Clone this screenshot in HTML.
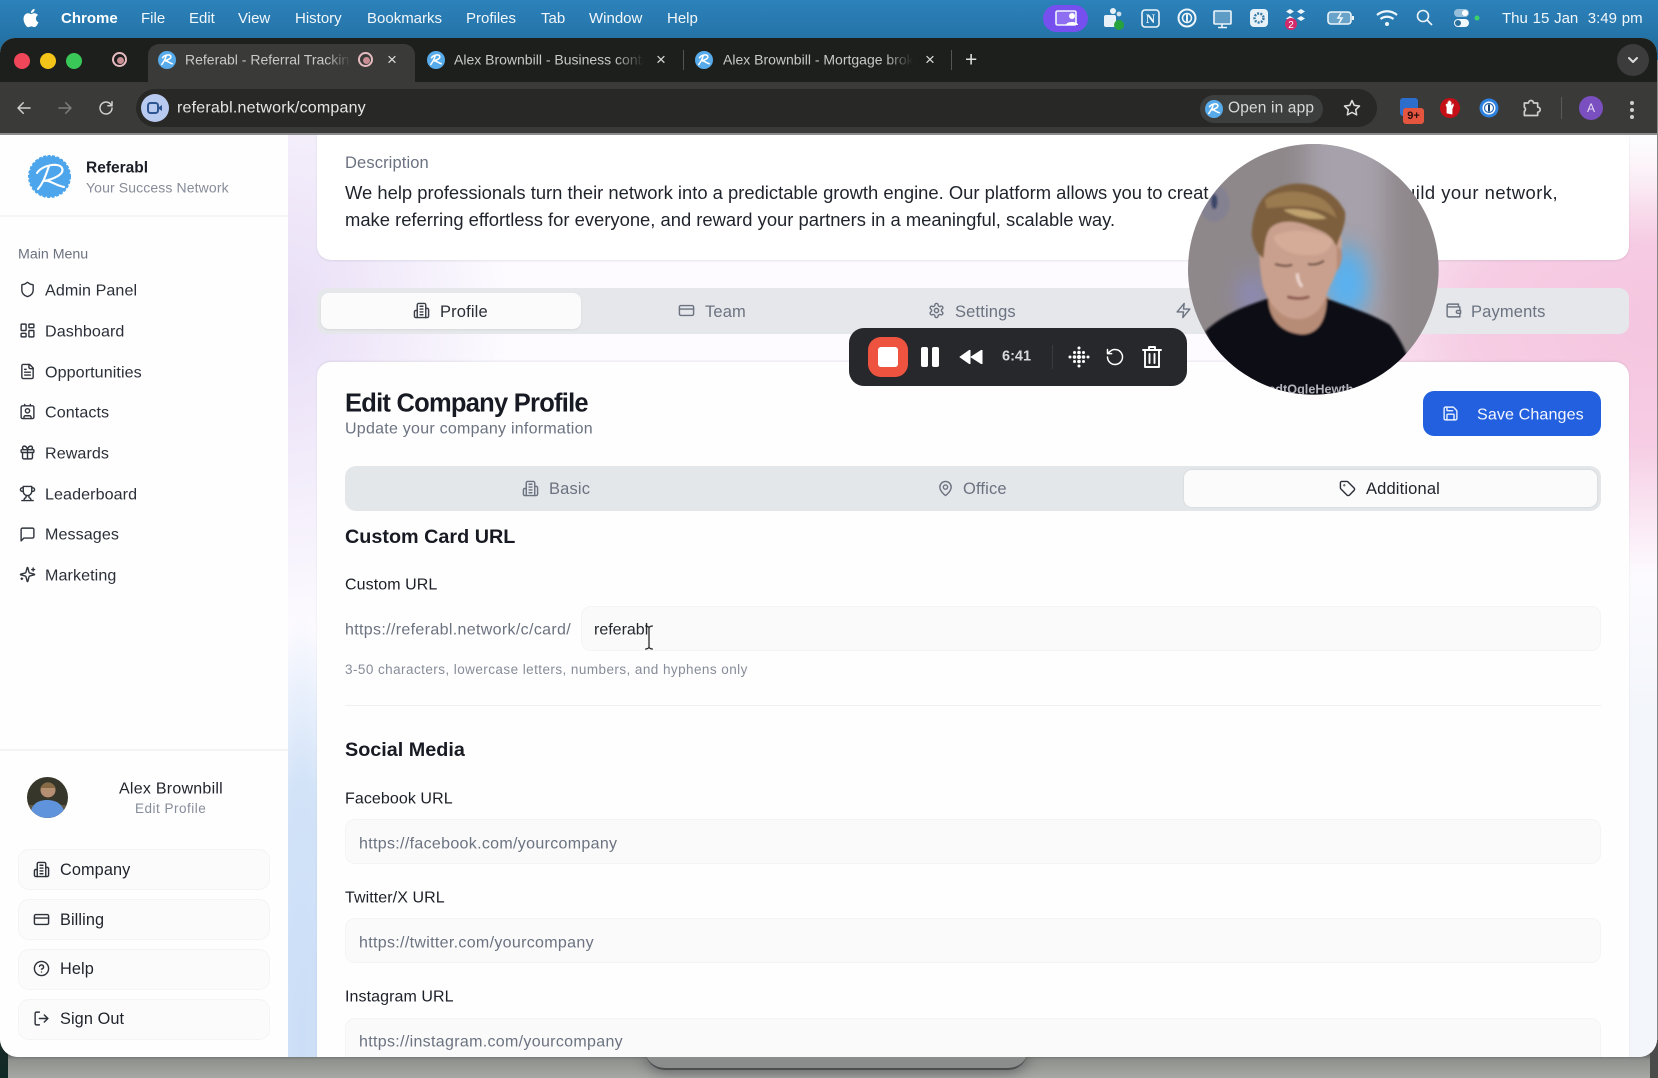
<!DOCTYPE html>
<html lang="en"><head><meta charset="utf-8"><title>Referabl</title>
<style>
html,body{margin:0;padding:0;width:1658px;height:1078px;overflow:hidden;background:#888}
body{font-family:"Liberation Sans",sans-serif;position:relative}
.t{position:absolute;white-space:nowrap;line-height:1.2;transform:translateY(calc(-50% + 2px))}
.a{position:absolute}
svg.i{position:absolute;fill:none;stroke:currentColor;stroke-width:2;stroke-linecap:round;stroke-linejoin:round;overflow:visible}
.m{color:#f2f7fb;font-size:15px;transform:translateY(calc(-50% + 1px))}
.nav{font-size:16.1px;color:#2a2f38;letter-spacing:.08px;left:45px;transform:translateY(calc(-50% + 1px))}
.ni{width:17px;height:17px;left:19px;color:#30353e}
.btn{position:absolute;left:18px;width:250px;height:39px;border:1px solid #f3f4f5;border-radius:11px;background:#fbfbfb}
.bt{left:60px;font-size:16.3px;color:#1f232b;letter-spacing:.1px;transform:translateY(calc(-50% + 1px))}
.bi{left:33px;width:17px;height:17px;color:#2c3038}
.g{color:#6b7280;font-size:16.5px;letter-spacing:.15px}
.gi{width:17px;height:17px;color:#6b7280}
.inp{position:absolute;background:#fafafa;border:1px solid #f3f4f5;border-radius:10px;box-sizing:border-box}
.lb{font-size:16px;color:#1b1f27;left:345px;letter-spacing:.08px}
.ph{font-size:16px;color:#6b7280;left:359px;letter-spacing:.32px}
.h{font-weight:bold;font-size:19.8px;color:#171a22;left:345px}
.fav{position:absolute;width:18px;height:18px;border-radius:50%;background:#58abea}
.tabx{color:#dcdcdc;font-size:17px;transform:translateY(-50%)}
.tt{font-size:14px;color:#c9c9c9;transform:translateY(-50%)}
</style></head><body>
<svg width="0" height="0" style="position:absolute">
<defs>
<symbol id="shield" viewBox="0 0 24 24"><path d="M20 13c0 5-3.5 7.5-7.66 8.95a1 1 0 0 1-.67-.01C7.5 20.5 4 18 4 13V6a1 1 0 0 1 1-1c2 0 4.5-1.2 6.24-2.72a1.17 1.17 0 0 1 1.52 0C14.51 3.81 17 5 19 5a1 1 0 0 1 1 1z"/></symbol>
<symbol id="dash" viewBox="0 0 24 24"><rect x="3" y="3" width="7" height="9" rx="1"/><rect x="14" y="3" width="7" height="5" rx="1"/><rect x="14" y="12" width="7" height="9" rx="1"/><rect x="3" y="16" width="7" height="5" rx="1"/></symbol>
<symbol id="file" viewBox="0 0 24 24"><path d="M15 2H6a2 2 0 0 0-2 2v16a2 2 0 0 0 2 2h12a2 2 0 0 0 2-2V7Z"/><path d="M14 2v4a2 2 0 0 0 2 2h4"/><path d="M10 9H8M16 13H8M16 17H8"/></symbol>
<symbol id="contact" viewBox="0 0 24 24"><path d="M16 2v2M8 2v2M7 22v-2a2 2 0 0 1 2-2h6a2 2 0 0 1 2 2v2"/><rect x="3" y="4" width="18" height="18" rx="2"/><circle cx="12" cy="11" r="3"/></symbol>
<symbol id="gift" viewBox="0 0 24 24"><rect x="3" y="8" width="18" height="4" rx="1"/><path d="M12 8v13M19 12v7a2 2 0 0 1-2 2H7a2 2 0 0 1-2-2v-7M7.5 8a2.5 2.5 0 0 1 0-5A4.8 8 0 0 1 12 8a4.8 8 0 0 1 4.5-5 2.5 2.5 0 0 1 0 5"/></symbol>
<symbol id="trophy" viewBox="0 0 24 24"><path d="M6 9H4.5a2.5 2.5 0 0 1 0-5H6M18 9h1.5a2.5 2.5 0 0 0 0-5H18M4 22h16M10 14.66V17c0 .55-.47.98-.97 1.21C7.85 18.75 7 20.24 7 22M14 14.66V17c0 .55.47.98.97 1.21C16.15 18.75 17 20.24 17 22M18 2H6v7a6 6 0 0 0 12 0V2Z"/></symbol>
<symbol id="msg" viewBox="0 0 24 24"><path d="M21 15a2 2 0 0 1-2 2H7l-4 4V5a2 2 0 0 1 2-2h14a2 2 0 0 1 2 2z"/></symbol>
<symbol id="spark" viewBox="0 0 24 24"><path d="M9.937 15.5A2 2 0 0 0 8.5 14.063l-6.135-1.582a.5.5 0 0 1 0-.962L8.5 9.936A2 2 0 0 0 9.937 8.5l1.582-6.135a.5.5 0 0 1 .963 0L14.063 8.5A2 2 0 0 0 15.5 9.937l6.135 1.581a.5.5 0 0 1 0 .964L15.5 14.063a2 2 0 0 0-1.437 1.437l-1.582 6.135a.5.5 0 0 1-.963 0z"/><path d="M20 3v4M22 5h-4M4 17v2M5 18H3"/></symbol>
<symbol id="bld" viewBox="0 0 24 24"><path d="M6 22V4a2 2 0 0 1 2-2h8a2 2 0 0 1 2 2v18Z"/><path d="M6 12H4a2 2 0 0 0-2 2v6a2 2 0 0 0 2 2h2M18 9h2a2 2 0 0 1 2 2v9a2 2 0 0 1-2 2h-2M10 6h4M10 10h4M10 14h4M10 18h4"/></symbol>
<symbol id="card" viewBox="0 0 24 24"><rect x="2" y="5" width="20" height="14" rx="2"/><path d="M2 10h20"/></symbol>
<symbol id="help" viewBox="0 0 24 24"><circle cx="12" cy="12" r="10"/><path d="M9.09 9a3 3 0 0 1 5.83 1c0 2-3 3-3 3M12 17h.01"/></symbol>
<symbol id="out" viewBox="0 0 24 24"><path d="M9 21H5a2 2 0 0 1-2-2V5a2 2 0 0 1 2-2h4M16 17l5-5-5-5M21 12H9"/></symbol>
<symbol id="gear" viewBox="0 0 24 24"><path d="M12.22 2h-.44a2 2 0 0 0-2 2v.18a2 2 0 0 1-1 1.73l-.43.25a2 2 0 0 1-2 0l-.15-.08a2 2 0 0 0-2.73.73l-.22.38a2 2 0 0 0 .73 2.73l.15.1a2 2 0 0 1 1 1.72v.51a2 2 0 0 1-1 1.74l-.15.09a2 2 0 0 0-.73 2.73l.22.38a2 2 0 0 0 2.73.73l.15-.08a2 2 0 0 1 2 0l.43.25a2 2 0 0 1 1 1.73V20a2 2 0 0 0 2 2h.44a2 2 0 0 0 2-2v-.18a2 2 0 0 1 1-1.73l.43-.25a2 2 0 0 1 2 0l.15.08a2 2 0 0 0 2.73-.73l.22-.39a2 2 0 0 0-.73-2.73l-.15-.08a2 2 0 0 1-1-1.74v-.5a2 2 0 0 1 1-1.74l.15-.09a2 2 0 0 0 .73-2.73l-.22-.38a2 2 0 0 0-2.73-.73l-.15.08a2 2 0 0 1-2 0l-.43-.25a2 2 0 0 1-1-1.73V4a2 2 0 0 0-2-2z"/><circle cx="12" cy="12" r="3"/></symbol>
<symbol id="zap" viewBox="0 0 24 24"><path d="M13 2 3 14h9l-1 8 10-12h-9l1-8z"/></symbol>
<symbol id="wallet" viewBox="0 0 24 24"><path d="M21 12V7H5a2 2 0 0 1 0-4h14v4M3 5v14a2 2 0 0 0 2 2h16v-5M18 12a2 2 0 0 0 0 4h4v-4Z"/></symbol>
<symbol id="pin" viewBox="0 0 24 24"><path d="M20 10c0 6-8 12-8 12s-8-6-8-12a8 8 0 0 1 16 0Z"/><circle cx="12" cy="10" r="3"/></symbol>
<symbol id="tag" viewBox="0 0 24 24"><path d="M12.586 2.586A2 2 0 0 0 11.172 2H4a2 2 0 0 0-2 2v7.172a2 2 0 0 0 .586 1.414l8.704 8.704a2.426 2.426 0 0 0 3.42 0l6.58-6.58a2.426 2.426 0 0 0 0-3.42z"/><circle cx="7.5" cy="7.5" r=".5"/></symbol>
<symbol id="save" viewBox="0 0 24 24"><path d="M15.2 3a2 2 0 0 1 1.4.6l3.8 3.8a2 2 0 0 1 .6 1.4V19a2 2 0 0 1-2 2H5a2 2 0 0 1-2-2V5a2 2 0 0 1 2-2z"/><path d="M17 21v-7a1 1 0 0 0-1-1H8a1 1 0 0 0-1 1v7M7 3v4a1 1 0 0 0 1 1h7"/></symbol>
<symbol id="r" viewBox="0 0 24 24"><path d="M6 9c3-4 10-5 11-2s-4 5-8 6c4 0 6 3 10 4M11 6c-1 4-3 8-6 12" fill="none" stroke="#fff" stroke-width="2" stroke-linecap="round"/></symbol>
<filter id="b4" x="-30%" y="-30%" width="160%" height="160%"><feGaussianBlur stdDeviation="3"/></filter>
<filter id="b30" x="-150%" y="-150%" width="400%" height="400%"><feGaussianBlur stdDeviation="34"/></filter>
<clipPath id="cc"><circle cx="400" cy="388" r="376"/></clipPath>
</defs></svg>

<!-- desktop backdrop -->
<div class="a" style="left:0;top:0;width:1658px;height:60px;background:linear-gradient(#2d82bb,#2474a8 60%,#1e6690)"></div>
<div class="a" style="left:0;top:1050px;width:1658px;height:28px;background:linear-gradient(#3f4241,#8f918e 35%,#a6a8a3)"></div>
<div class="a" style="left:0;top:1040px;width:8px;height:38px;background:linear-gradient(#1c2a28,#0e2a26)"></div>
<div class="a" style="left:1650px;top:1040px;width:8px;height:38px;background:#4a4c4c"></div>
<div class="a" style="left:645px;top:1050px;width:383px;height:18px;background:#8b8d8d;border:solid #4b4d4e;border-width:0 0 2px 0;border-radius:0 0 22px 22px;box-shadow:0 2px 14px rgba(40,40,50,.5)"></div>

<!-- menu bar -->
<svg class="a" style="left:20px;top:7px" width="22" height="22" viewBox="0 0 24 24"><path fill="#fff" d="M18.71 19.5c-.83 1.24-1.71 2.45-3.05 2.47-1.34.03-1.77-.79-3.29-.79-1.53 0-2 .77-3.27.82-1.31.05-2.3-1.32-3.14-2.53C4.25 17 2.94 12.45 4.7 9.39c.87-1.52 2.43-2.48 4.12-2.51 1.28-.02 2.5.87 3.29.87.78 0 2.26-1.07 3.81-.91.65.03 2.47.26 3.64 1.98-.09.06-2.17 1.28-2.15 3.81.03 3.02 2.65 4.03 2.68 4.04-.03.07-.42 1.44-1.38 2.83M13 3.5c.73-.83 1.94-1.46 2.94-1.5.13 1.17-.34 2.35-1.04 3.19-.69.85-1.83 1.51-2.95 1.42-.15-1.15.41-2.35 1.05-3.11z"/></svg>
<span class="t m" style="left:61px;top:18px;font-weight:bold;color:#fff">Chrome</span>
<span class="t m" style="left:141px;top:18px">File</span>
<span class="t m" style="left:189px;top:18px">Edit</span>
<span class="t m" style="left:238px;top:18px">View</span>
<span class="t m" style="left:295px;top:18px">History</span>
<span class="t m" style="left:367px;top:18px">Bookmarks</span>
<span class="t m" style="left:466px;top:18px">Profiles</span>
<span class="t m" style="left:541px;top:18px">Tab</span>
<span class="t m" style="left:589px;top:18px">Window</span>
<span class="t m" style="left:667px;top:18px">Help</span>
<div class="a" style="left:1043px;top:5px;width:45px;height:27px;border-radius:14px;background:#7650ee"></div>
<svg class="a" style="left:1030px;top:0" width="460" height="36" viewBox="0 0 460 36" fill="none" stroke="#eef5fa" stroke-width="1.6">
<rect x="26" y="11" width="20" height="14" rx="1.5" fill="rgba(255,255,255,.18)"/><circle cx="42" cy="16" r="3" fill="#fff" stroke="none"/><path d="M36 25c0-4 12-4 12 0z" fill="#fff" stroke="none"/>
<rect x="74" y="15" width="12" height="12" rx="2" fill="#e8f1f8" stroke="none"/><circle cx="83" cy="11" r="3" fill="#e8f1f8" stroke="none"/><circle cx="89" cy="14" r="2.4" fill="#cfe0ec" stroke="none"/><circle cx="89" cy="25" r="5" fill="#27a23c" stroke="none"/>
<rect x="112" y="10" width="17" height="17" rx="3"/><text x="120.5" y="23" font-family="Liberation Serif,serif" font-size="13" font-weight="bold" text-anchor="middle" fill="#eef5fa" stroke="none">N</text>
<circle cx="157" cy="18" r="8.5" stroke-width="2"/><circle cx="157" cy="18" r="4.5"/><path d="M157 14.5v7" stroke-width="2"/>
<rect x="184" y="11" width="17" height="13" rx="1" fill="rgba(255,255,255,.25)"/><path d="M192 24v3M188 27.5h9"/>
<rect x="220" y="9" width="18" height="18" rx="4" fill="#e8f1f8" stroke="none"/><circle cx="229" cy="18" r="4.5" stroke="#3a7ca8" stroke-width="2.4" stroke-dasharray="2 1.2"/>
<path d="M260 9l4 2.5-4 2.5-4-2.5zM271 9l4 2.5-4 2.5-4-2.5zM260 16l4 2.5-4 2.5-4-2.5zM271 16l4 2.5-4 2.5-4-2.5z" fill="#eef5fa" stroke="none"/><circle cx="261" cy="24" r="6" fill="#d22a6a" stroke="none"/><text x="261" y="28" font-size="10" text-anchor="middle" fill="#fff" stroke="none" font-family="Liberation Sans,sans-serif">2</text>
<rect x="298" y="12" width="23" height="12" rx="3" fill="rgba(255,255,255,.3)"/><path d="M311 13l-3 5h4l-3 5" stroke-width="1.6"/><path d="M323 16v4" stroke-width="2"/>
<path d="M347 15c6-5 14-5 20 0M350.500 19c4-3 9-3 13 0" stroke-width="2.2"/><circle cx="357" cy="24" r="2" fill="#eef5fa" stroke="none"/>
<circle cx="393" cy="16" r="5.500"/><path d="M397 20l5 5"/>
<rect x="424" y="9" width="15" height="8" rx="4" fill="rgba(255,255,255,.5)" stroke="none"/><circle cx="435" cy="13" r="3" fill="#fff" stroke="none"/><rect x="424" y="19" width="15" height="8" rx="4" fill="#f2f7fb" stroke="none"/><circle cx="428" cy="23" r="3" fill="#2a6f9c" stroke="none"/><circle cx="447" cy="18" r="2.500" fill="#3bd36a" stroke="none"/>
</svg>
<span class="t m" style="left:1502px;top:18px;word-spacing:.6px">Thu 15 Jan&nbsp; 3:49 pm</span>

<!-- window -->
<div class="a" style="left:0;top:0;width:1658px;height:1078px;clip-path:inset(38px 1px 21px 0 round 15px 15px 18px 18px);background:#fff">
<div class="a" style="left:0;top:38px;width:1658px;height:45px;background:#1d1f1d"></div>
<div class="a" style="left:0;top:82px;width:1658px;height:53px;background:#3a3a39"></div>
<div class="a" style="left:0;top:133px;width:1658px;height:2px;background:#8b8b8b"></div>
<div class="a" style="left:148px;top:44px;width:267px;height:39px;background:#3a3a39;border-radius:11px 11px 0 0"></div>
<div class="a" style="left:14px;top:53px;width:16px;height:16px;border-radius:50%;background:#f0465a"></div>
<div class="a" style="left:40px;top:53px;width:16px;height:16px;border-radius:50%;background:#f4c518"></div>
<div class="a" style="left:66px;top:53px;width:16px;height:16px;border-radius:50%;background:#39c758"></div>
<div class="a" style="left:112px;top:52px;width:11px;height:11px;border:2.500px solid #e6bcc0;border-radius:50%"></div><div class="a" style="left:116.500px;top:56.500px;width:7px;height:7px;border-radius:50%;background:#c98d94"></div>
<div class="fav" style="left:158px;top:51px"><svg width="18" height="18"><use href="#r"/></svg></div>
<div class="t tt" style="left:185px;top:60px;width:166px;overflow:hidden;-webkit-mask-image:linear-gradient(90deg,#000 85%,transparent)">Referabl - Referral Tracking</div>
<div class="a" style="left:358px;top:52px;width:11px;height:11px;border:2.500px solid #e6bcc0;border-radius:50%"></div><div class="a" style="left:362.500px;top:56.500px;width:7px;height:7px;border-radius:50%;background:#c98d94"></div>
<span class="t tabx" style="left:387px;top:60px">×</span>
<div class="fav" style="left:427px;top:51px"><svg width="18" height="18"><use href="#r"/></svg></div>
<div class="t tt" style="left:454px;top:60px;width:190px;overflow:hidden;-webkit-mask-image:linear-gradient(90deg,#000 85%,transparent)">Alex Brownbill - Business contact</div>
<span class="t tabx" style="left:656px;top:60px">×</span>
<div class="a" style="left:683px;top:50px;width:1px;height:20px;background:#555"></div>
<div class="fav" style="left:695px;top:51px"><svg width="18" height="18"><use href="#r"/></svg></div>
<div class="t tt" style="left:723px;top:60px;width:190px;overflow:hidden;-webkit-mask-image:linear-gradient(90deg,#000 85%,transparent)">Alex Brownbill - Mortgage broker</div>
<span class="t tabx" style="left:925px;top:60px">×</span>
<div class="a" style="left:951px;top:50px;width:1px;height:20px;background:#555"></div>
<span class="t" style="left:965px;top:58px;color:#e0e0e0;font-size:21px">+</span>
<div class="a" style="left:1617px;top:44px;width:32px;height:32px;border-radius:50%;background:#3b3c3b"></div>
<svg class="i" style="left:1627px;top:54px;color:#ddd" width="12" height="12" viewBox="0 0 12 12"><path d="M2 4l4 4 4-4"/></svg>
<svg class="i" style="left:15px;top:99px;color:#cfcfcf" width="18" height="18" viewBox="0 0 24 24"><path d="M20 12H4M11 5l-7 7 7 7"/></svg>
<svg class="i" style="left:56px;top:99px;color:#7d7d7d" width="18" height="18" viewBox="0 0 24 24"><path d="M4 12h16M13 5l7 7-7 7"/></svg>
<svg class="i" style="left:97px;top:99px;color:#cfcfcf" width="18" height="18" viewBox="0 0 24 24"><path d="M20 12a8 8 0 1 1-2.500-5.800L20 9M20 3.500V9h-5.500"/></svg>
<div class="a" style="left:136px;top:89px;width:1241px;height:38px;border-radius:19px;background:#282827"></div>
<div class="a" style="left:141px;top:94px;width:28px;height:28px;border-radius:50%;background:#b8caf0"></div>
<svg class="a" style="left:146px;top:100px" width="18" height="16" viewBox="0 0 18 16"><rect x="2" y="3" width="10" height="10" rx="2.500" fill="none" stroke="#2d5490" stroke-width="2"/><path d="M13 7l3-2v6l-3-2z" fill="#2d5490"/></svg>
<span class="t" style="left:177px;top:106px;font-size:16px;color:#e6e6e6;letter-spacing:.2px">referabl.network/company</span>
<div class="a" style="left:1200px;top:95px;width:123px;height:28px;border-radius:14px;background:#3d3e3e"></div>
<div class="fav" style="left:1205px;top:100px"><svg width="18" height="18"><use href="#r"/></svg></div>
<span class="t" style="left:1228px;top:107px;font-size:15.500px;color:#d8d8d8;letter-spacing:.15px">Open in app</span>
<svg class="i" style="left:1343px;top:99px;color:#dedede" width="18" height="18" viewBox="0 0 24 24"><path d="M12 2l3 6.500 7 .9-5.100 4.800 1.300 7L12 17.800 5.800 21.200l1.300-7L2 9.400l7-.9z"/></svg>
<div class="a" style="left:1400px;top:98px;width:18px;height:18px;background:#2d6dcc;border-radius:3px"></div>
<div class="a" style="left:1403px;top:108px;width:21px;height:16px;background:#e4553f;border-radius:3px;font-size:11px;font-weight:bold;text-align:center;line-height:16px;color:#2a1010">9+</div>
<svg class="a" style="left:1438px;top:96px" width="24" height="24" viewBox="0 0 24 24"><circle cx="12" cy="12" r="10" fill="#c40f16"/><path d="M9 17v-6l-1-2 1-1 1 1V6h1v3-4h1v4-3h1v3l1 1 1-2 .5 1-1.500 4v5z" fill="#fff" stroke="#fff" stroke-width=".8"/></svg>
<svg class="a" style="left:1479px;top:98px" width="20" height="20" viewBox="0 0 20 20"><circle cx="10" cy="10" r="9.500" fill="#2d82e0"/><circle cx="10" cy="10" r="6.500" fill="#fff"/><circle cx="10" cy="10" r="4.500" fill="none" stroke="#2d6db0" stroke-width="1.200"/><rect x="9" y="6.500" width="2" height="7" fill="#173f6e"/></svg>
<svg class="i" style="left:1521px;top:98px;color:#cfcfcf" width="20" height="20" viewBox="0 0 24 24"><path d="M4 6h5a3 3 0 0 1 6 0h5v5a3 3 0 0 1 0 6v4H4v-5a3 3 0 0 0 0-5z"/></svg>
<div class="a" style="left:1561px;top:97px;width:1px;height:22px;background:#5a5a5a"></div>
<div class="a" style="left:1579px;top:96px;width:24px;height:24px;border-radius:50%;background:#7a4fc0;color:#e8dcf6;font-size:12px;text-align:center;line-height:24px">A</div>
<div class="a" style="left:1630px;top:101px;width:4px;height:4px;border-radius:50%;background:#d0d0d0;box-shadow:0 7px #d0d0d0,0 14px #d0d0d0"></div>

<!-- content backgrounds -->
<div class="a" style="left:288px;top:135px;width:1370px;height:922px;overflow:hidden;background:
 radial-gradient(ellipse 60px 420px at 14px 900px,#cbdef7 0%,#d2e3f8 60%,rgba(207,225,247,0) 100%),
 radial-gradient(ellipse 400px 250px at 1370px 190px,#f5c5df 0%,#f6cde4 48%,rgba(246,205,228,0) 100%),
 radial-gradient(ellipse 220px 320px at 0 180px,#e8def6 0%,rgba(232,222,246,0) 100%),#fdfbff"></div>
<div class="a" style="left:1629px;top:135px;width:29px;height:110px;background:linear-gradient(#fdfdfe,rgba(253,253,254,0))"></div>
<div class="a" style="left:1629px;top:560px;width:29px;height:500px;background:linear-gradient(rgba(244,247,251,0),#f3f6fb 30%)"></div>

<!-- sidebar -->
<div class="a" style="left:0;top:135px;width:288px;height:922px;background:#fefefe"></div>
<div class="a" style="left:0;top:215px;width:288px;height:2px;background:#f6f6f7"></div>
<div class="a" style="left:0;top:749px;width:288px;height:2px;background:#f2f3f4"></div>
<svg class="a" style="left:28px;top:155px" width="43" height="43" viewBox="0 0 43 43"><circle cx="21.500" cy="21.500" r="20.500" fill="#4da5ec" stroke="#4da5ec" stroke-width="2" stroke-dasharray="3 1.500"/><path d="M9 18c5-8 22-11 25-5s-8 11-18 13c7-1 10 4 20 6M21 11c-3 8-5 16-11 23" fill="none" stroke="#fff" stroke-width="2.100" stroke-linecap="round"/></svg>
<span class="t" style="left:86px;top:167px;font-size:15.500px;font-weight:bold;color:#1a1d25">Referabl</span>
<span class="t" style="left:86px;top:186px;font-size:14px;color:#868c98;letter-spacing:.12px">Your Success Network</span>
<span class="t" style="left:18px;top:253px;font-size:14.200px;color:#6b7280">Main Menu</span>
<svg class="i ni" style="top:281px"><use href="#shield"/></svg><span class="t nav" style="top:290px">Admin Panel</span>
<svg class="i ni" style="top:322px"><use href="#dash"/></svg><span class="t nav" style="top:331px">Dashboard</span>
<svg class="i ni" style="top:363px"><use href="#file"/></svg><span class="t nav" style="top:372px">Opportunities</span>
<svg class="i ni" style="top:403px"><use href="#contact"/></svg><span class="t nav" style="top:412px">Contacts</span>
<svg class="i ni" style="top:444px"><use href="#gift"/></svg><span class="t nav" style="top:453px">Rewards</span>
<svg class="i ni" style="top:485px"><use href="#trophy"/></svg><span class="t nav" style="top:494px">Leaderboard</span>
<svg class="i ni" style="top:526px"><use href="#msg"/></svg><span class="t nav" style="top:534px">Messages</span>
<svg class="i ni" style="top:566px"><use href="#spark"/></svg><span class="t nav" style="top:575px">Marketing</span>

<svg class="a" style="left:27px;top:777px" width="41" height="41" viewBox="0 0 41 41"><defs><clipPath id="av"><circle cx="20.500" cy="20.500" r="20.500"/></clipPath></defs><g clip-path="url(#av)"><rect width="41" height="41" fill="#37362a"/><rect x="0" y="28" width="41" height="13" fill="#5d5542"/><path d="M3 41c0-14 8-18 17-18s18 4 18 18z" fill="#5f93dc"/><circle cx="21" cy="13" r="7.500" fill="#b68f73"/><path d="M13.500 11c2-7 13-7 15 0z" fill="#856a45"/></g></svg>
<span class="t" style="left:119px;top:787px;font-size:16px;color:#22252d;letter-spacing:.25px">Alex Brownbill</span>
<span class="t" style="left:135px;top:807px;font-size:13.500px;color:#868c99;letter-spacing:.5px">Edit Profile</span>
<div class="btn" style="top:849px"></div><svg class="i bi" style="top:861px"><use href="#bld"/></svg><span class="t bt" style="top:870px">Company</span>
<div class="btn" style="top:899px"></div><svg class="i bi" style="top:911px"><use href="#card"/></svg><span class="t bt" style="top:920px">Billing</span>
<div class="btn" style="top:949px"></div><svg class="i bi" style="top:960px"><use href="#help"/></svg><span class="t bt" style="top:969px">Help</span>
<div class="btn" style="top:999px"></div><svg class="i bi" style="top:1010px"><use href="#out"/></svg><span class="t bt" style="top:1019px">Sign Out</span>

<!-- top card -->
<div class="a" style="left:317px;top:135px;width:1312px;height:125px;background:#fff;border-radius:0 0 14px 14px;box-shadow:0 1px 2px rgba(90,90,110,.14)"></div>
<span class="t" style="left:345px;top:162px;font-size:16.500px;color:#6b7280;letter-spacing:.12px">Description</span>
<span class="t" style="left:345px;top:191px;font-size:18.400px;color:#1f232b">We help professionals turn their network into a predictable growth engine. Our platform allows you to creat</span>
<span class="t" style="left:1405px;top:191px;font-size:18.400px;color:#1f232b;letter-spacing:.5px">uild your network,</span>
<span class="t" style="left:345px;top:218px;font-size:18.400px;color:#1f232b">make referring effortless for everyone, and reward your partners in a meaningful, scalable way.</span>

<!-- main tabs -->
<div class="a" style="left:317px;top:288px;width:1312px;height:46px;background:#e5e7ea;border-radius:10px"></div>
<div class="a" style="left:321px;top:293px;width:260px;height:36px;background:#fbfbfb;border-radius:8px;box-shadow:0 1px 2px rgba(0,0,0,.07)"></div>
<svg class="i gi" style="left:413px;top:302px;color:#3a3f48"><use href="#bld"/></svg><span class="t g" style="left:440px;top:311px;color:#2a2e36">Profile</span>
<svg class="i gi" style="left:678px;top:302px"><use href="#card"/></svg><span class="t g" style="left:705px;top:311px">Team</span>
<svg class="i gi" style="left:928px;top:302px"><use href="#gear"/></svg><span class="t g" style="left:955px;top:311px">Settings</span>
<svg class="i gi" style="left:1175px;top:302px"><use href="#zap"/></svg>
<svg class="i gi" style="left:1445px;top:302px"><use href="#wallet"/></svg><span class="t g" style="left:1471px;top:311px">Payments</span>

<!-- main card -->
<div class="a" style="left:317px;top:362px;width:1312px;height:720px;background:#fefefe;border-radius:14px;box-shadow:0 -1px 2px rgba(90,90,110,.12)"></div>
<span class="t" style="left:345px;top:402px;font-size:25.500px;font-weight:bold;color:#171a22;letter-spacing:-.75px">Edit Company Profile</span>
<span class="t" style="left:345px;top:427px;font-size:16px;color:#6b7280;letter-spacing:.25px">Update your company information</span>
<div class="a" style="left:1423px;top:391px;width:178px;height:45px;background:#2360e0;border-radius:11px"></div>
<svg class="i" style="left:1442px;top:405px;color:#e8effc;width:17px;height:17px"><use href="#save"/></svg>
<span class="t" style="left:1477px;top:413px;font-size:16.100px;color:#f4f7fe;letter-spacing:.1px">Save Changes</span>

<div class="a" style="left:345px;top:466px;width:1256px;height:45px;background:#e4e7ea;border-radius:11px"></div>
<div class="a" style="left:1184px;top:470px;width:413px;height:37px;background:#fbfbfb;border-radius:8px;box-shadow:0 0 2px rgba(0,0,0,.1)"></div>
<svg class="i gi" style="left:522px;top:480px"><use href="#bld"/></svg><span class="t g" style="left:549px;top:488px">Basic</span>
<svg class="i gi" style="left:937px;top:480px"><use href="#pin"/></svg><span class="t g" style="left:963px;top:488px">Office</span>
<svg class="i gi" style="left:1339px;top:480px;color:#2a2e36"><use href="#tag"/></svg><span class="t g" style="left:1366px;top:488px;color:#20242c">Additional</span>

<span class="t h" style="top:536px">Custom Card URL</span>
<span class="t lb" style="top:583px">Custom URL</span>
<span class="t" style="left:345px;top:628px;font-size:16px;color:#6b7280;letter-spacing:.34px">https://referabl.network/c/card/</span>
<div class="inp" style="left:581px;top:606px;width:1020px;height:45px"></div>
<span class="t" style="left:594px;top:628px;font-size:16px;color:#23272f">referabl</span>
<svg class="a" style="left:643px;top:625px" width="12" height="26" viewBox="0 0 12 27" fill="none" stroke="#222" stroke-width="1.300"><path d="M2 1c2 0 4 1 4 2v20c0 1 2 2 4 2M10 1C8 1 6 2 6 3M6 23c0 1-2 2-4 2"/></svg>
<span class="t" style="left:345px;top:668px;font-size:13.500px;color:#868c98;letter-spacing:.44px">3-50 characters, lowercase letters, numbers, and hyphens only</span>
<div class="a" style="left:345px;top:705px;width:1256px;height:1px;background:#eef0f1"></div>

<span class="t h" style="top:749px">Social Media</span>
<span class="t lb" style="top:797px">Facebook URL</span>
<div class="inp" style="left:345px;top:819px;width:1256px;height:45px"></div>
<span class="t ph" style="top:842px">https://facebook.com/yourcompany</span>
<span class="t lb" style="top:896px">Twitter/X URL</span>
<div class="inp" style="left:345px;top:918px;width:1256px;height:45px"></div>
<span class="t ph" style="top:941px">https://twitter.com/yourcompany</span>
<span class="t lb" style="top:995px">Instagram URL</span>
<div class="inp" style="left:345px;top:1018px;width:1256px;height:60px"></div>
<span class="t ph" style="top:1040px">https://instagram.com/yourcompany</span>

<!-- recording bar -->
<div class="a" style="left:849px;top:328px;width:338px;height:58px;background:#27282c;border-radius:15px"></div>
<div class="a" style="left:868px;top:337px;width:40px;height:40px;background:#ee5340;border-radius:13px"></div>
<div class="a" style="left:878px;top:347px;width:20px;height:20px;background:#fff;border-radius:3px"></div>
<div class="a" style="left:921px;top:347px;width:7px;height:20px;background:#fff;border-radius:2px"></div>
<div class="a" style="left:932px;top:347px;width:7px;height:20px;background:#fff;border-radius:2px"></div>
<svg class="a" style="left:959px;top:350px" width="24" height="14" viewBox="0 0 24 14"><path d="M11 0v14L1 7zM23 0v14L12 7z" fill="#fff" stroke="#fff" stroke-linejoin="round"/></svg>
<span class="t" style="left:1002px;top:355px;font-size:14.500px;font-weight:bold;color:#d8d9db">6:41</span>
<div class="a" style="left:1052px;top:345px;width:1px;height:24px;background:#3a3b40"></div>
<svg class="a" style="left:1068px;top:346px" width="22" height="22" viewBox="0 0 22 22" fill="#fff"><circle cx="11" cy="2" r="1.500"/><circle cx="6.500" cy="6.500" r="1.500"/><circle cx="11" cy="6.500" r="1.800"/><circle cx="15.500" cy="6.500" r="1.500"/><circle cx="2" cy="11" r="1.500"/><circle cx="6.500" cy="11" r="1.800"/><circle cx="11" cy="11" r="2"/><circle cx="15.500" cy="11" r="1.800"/><circle cx="20" cy="11" r="1.500"/><circle cx="6.500" cy="15.500" r="1.500"/><circle cx="11" cy="15.500" r="1.800"/><circle cx="15.500" cy="15.500" r="1.500"/><circle cx="11" cy="20" r="1.500"/></svg>
<svg class="i" style="left:1105px;top:347px;color:#fff;stroke-width:1.800" width="20" height="20" viewBox="0 0 24 24"><path d="M3 12a9 9 0 1 0 3-6.700L3 8M3 3v5h5"/></svg>
<svg class="i" style="left:1141px;top:345px;color:#fff;stroke-width:1.900" width="22" height="24" viewBox="0 0 22 24"><path d="M2 5h18M8 5V2h6v3M4 5v17h14V5M8.500 9v9M13.500 9v9"/></svg>

<!-- webcam -->
<svg class="a" style="left:1180px;top:140px" width="270" height="260" viewBox="0 0 810 780">
<g clip-path="url(#cc)">
<rect width="810" height="780" fill="#8f888b"/>
<rect x="380" y="-100" width="240" height="980" fill="#a6a1aa" filter="url(#b30)"/>
<ellipse cx="500" cy="420" rx="60" ry="105" fill="#4fb0f2" opacity=".9" filter="url(#b30)"/>
<ellipse cx="500" cy="445" rx="34" ry="60" fill="#58b4f5" filter="url(#b30)"/>
<ellipse cx="215" cy="465" rx="40" ry="65" fill="#8a8ce0" opacity=".6" filter="url(#b30)"/>
<ellipse cx="103" cy="190" rx="45" ry="55" fill="#7f7f95" opacity=".7" filter="url(#b4)"/>
<ellipse cx="103" cy="185" rx="9" ry="22" fill="#3b4468" filter="url(#b4)"/>
<g filter="url(#b4)">
<path d="M262 470h185l12 95c-40 30-160 30-200 10z" fill="#b78c77"/>
<path d="M238 280c0-40 50-80 120-78 70 0 118 40 126 90 6 50-14 110-36 150-14 40-30 90-90 95-50 3-90-40-110-100-10-60-12-100-10-157z" fill="#c9a08d"/>
<path d="M280 290c40-25 130-25 180 10-10 30-30 50-90 45-40-2-80-20-90-55z" fill="#d4ac98"/>
<path d="M470 320c20 0 22 45 0 75z" fill="#b88c78"/>
<path d="M285 372c22 6 36 8 52 2M384 372c18 4 34 0 48-10" stroke="#5e4039" stroke-width="6" fill="none"/>
<path d="M352 400c0 15 6 30 14 40" stroke="#ecd6cf" stroke-width="9" fill="none"/>
<path d="M322 470c26 8 50 6 66 0" stroke="#85504a" stroke-width="8" fill="none"/>
<path d="M215 285c2-70 30-125 75-140 60-30 165-15 205 70 5 35-15 70-25 105-25-50-50-45-90-65-40-15-85-15-110 10-15 25-15 45-20 90-20-15-30-40-35-70z" fill="#7d5f3d"/>
<path d="M255 180c30-30 110-35 170-5 30 20 40 40 45 60-40-30-90-45-210-30z" fill="#9a7a50"/>
<path d="M310 210c20-6 90-6 130 25-30 5-80 5-130-25z" fill="#bfa26e"/>
<path d="M75 575c55-55 130-80 190-100 0 40 20 100 100 108 60 0 75-60 75-108 65 25 145 50 190 80 30 40 50 80 60 120L600 780H170z" fill="#0a0c18"/>
</g>
<text x="385" y="760" font-family="Liberation Sans,sans-serif" font-weight="bold" font-size="38" fill="#b4b4bc" text-anchor="middle">redtOqleHewth</text>
</g></svg>
</div>
</body></html>
